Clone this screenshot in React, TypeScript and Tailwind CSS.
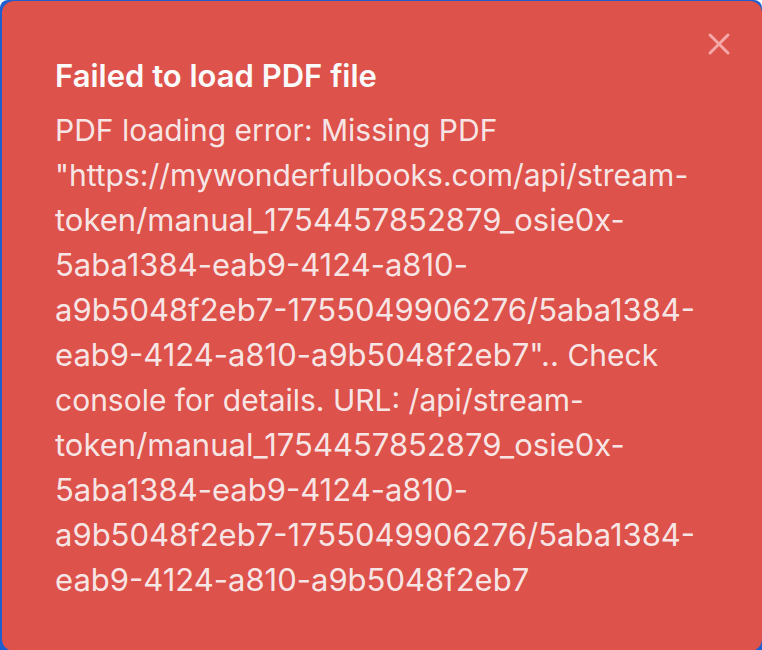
import { X } from "lucide-react";

function StreamPath({ suffix = "" }: { suffix?: string }) {
  return (
    <>
      <span className="text-[31px] leading-none">
        token/manual_1754457852879_osie0x-5aba1384-eab9-4124-a810-
        <span className="whitespace-nowrap">a9b5048f2eb7-1755049906276/5aba1384-</span>
        <wbr />
        {`eab9-4124-a810-a9b5048f2eb7${suffix}`}
      </span>
    </>
  );
}

export default function App() {
  return (
    <main className="min-h-screen bg-white font-['Inter',sans-serif]">
      <div className="rounded-t-lg bg-[#1d5fd0] pt-px pl-0.5">
        <section role="alert" className="relative rounded-xl bg-[#de524c] pt-[52px] pr-[66px] pb-12 pl-[53px] text-[#fafafa]">
          <h1 className="text-[31px] leading-[45px] font-semibold">Failed to load PDF file</h1>
          <p className="mt-2.5 text-[30px] leading-[45px] text-[#fafafa]/90">
            PDF loading error: Missing PDF "https://mywonderfulbooks.com/api/stream-
            <wbr />
            <StreamPath suffix={'"..'} />
            {" Check console for details. URL: /api/stream-"}
            <wbr />
            <StreamPath />
          </p>
          <button type="button" aria-label="Close" className="absolute top-[25px] right-[25px] text-[#f4a9a8]">
            <X size={36} strokeWidth={2} />
          </button>
        </section>
      </div>
    </main>
  );
}
